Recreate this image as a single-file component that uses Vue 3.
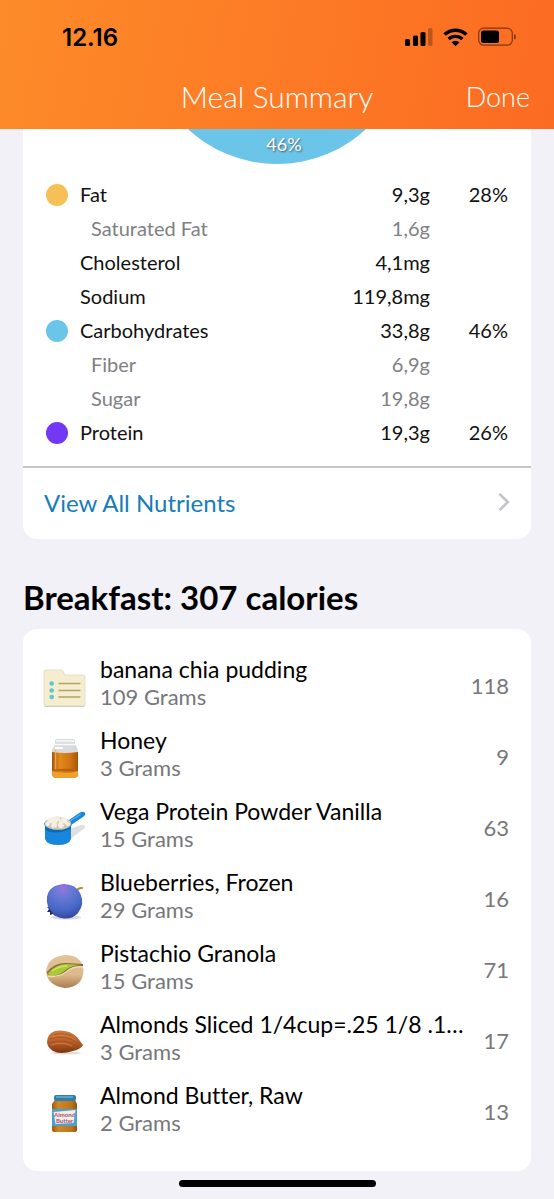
<script setup>
const nutrients = [
  { name: 'Fat', amount: '9,3g', percent: '28%', dot: 'fat' },
  { name: 'Saturated Fat', amount: '1,6g', sub: true },
  { name: 'Cholesterol', amount: '4,1mg' },
  { name: 'Sodium', amount: '119,8mg' },
  { name: 'Carbohydrates', amount: '33,8g', percent: '46%', dot: 'carbs' },
  { name: 'Fiber', amount: '6,9g', sub: true },
  { name: 'Sugar', amount: '19,8g', sub: true },
  { name: 'Protein', amount: '19,3g', percent: '26%', dot: 'protein' },
]

const foods = [
  { name: 'banana chia pudding', serving: '109 Grams', calories: 118, icon: 'recipe' },
  { name: 'Honey', serving: '3 Grams', calories: 9, icon: 'honey' },
  { name: 'Vega Protein Powder Vanilla', serving: '15 Grams', calories: 63, icon: 'scoop' },
  { name: 'Blueberries, Frozen', serving: '29 Grams', calories: 16, icon: 'blueberry' },
  { name: 'Pistachio Granola', serving: '15 Grams', calories: 71, icon: 'pistachio' },
  { name: 'Almonds Sliced 1/4cup=.25 1/8 .1…', serving: '3 Grams', calories: 17, icon: 'almond' },
  { name: 'Almond Butter, Raw', serving: '2 Grams', calories: 13, icon: 'butter' },
]
</script>

<template>
  <div class="page">
    <header class="header">
      <div class="status">
        <span class="clock">12.16</span>
        <svg class="signals" width="112" height="20" viewBox="0 0 112 20" aria-hidden="true">
          <rect x="0" y="12" width="5" height="7" rx="1.5" />
          <rect x="8" y="8.5" width="5" height="10.5" rx="1.5" />
          <rect x="15.5" y="5" width="5" height="14" rx="1.5" />
          <rect x="23" y="1" width="4.5" height="18" rx="1.5" opacity="0.25" />
          <g fill="none" stroke="#000" stroke-width="3.4">
            <path d="M39.5 7.6a16 16 0 0 1 22 0" />
            <path d="M43.6 12.1a10 10 0 0 1 13.8 0" />
          </g>
          <path d="M46.5 15.2a6 6 0 0 1 8 0l-4 4z" />
          <rect x="73.7" y="1.2" width="33.6" height="17" rx="5" fill="none" stroke="#000" stroke-opacity="0.5" stroke-width="1.2" />
          <rect x="76" y="3.5" width="18" height="12.5" rx="2.5" />
          <path d="M109 7v5.5q2-.8 2-2.75T109 7z" opacity="0.5" />
        </svg>
      </div>
      <div class="bar">
        <h1>Meal Summary</h1>
        <button type="button" class="done">Done</button>
      </div>
    </header>

    <main>
      <section class="card summary">
        <svg class="pie" width="262" height="35" viewBox="0 0 262 35" role="img" aria-label="Carbohydrates 46%">
          <circle cx="131" cy="-96" r="131" fill="#6bc5e8" />
          <text x="138" y="22" text-anchor="middle">46%</text>
        </svg>
        <table>
          <tbody>
            <tr v-for="n in nutrients" :key="n.name" :class="{ sub: n.sub }">
              <th scope="row">
                <span class="dot" :class="n.dot"></span>
                <span class="label">{{ n.name }}</span>
              </th>
              <td>{{ n.amount }}</td>
              <td class="percent">{{ n.percent }}</td>
            </tr>
          </tbody>
        </table>
        <a href="#nutrients" class="all">
          View All Nutrients
          <svg width="12" height="20" viewBox="0 0 12 20" fill="none" stroke="#c4c4c8" stroke-width="2.6" aria-hidden="true">
            <path d="M1.5 1.8 9.8 10 1.5 18.2" />
          </svg>
        </a>
      </section>

      <h2>Breakfast: 307 calories</h2>

      <ul class="card foods">
        <li v-for="f in foods" :key="f.name">
          <svg class="icon" width="44" height="44" viewBox="0 0 44 44" aria-hidden="true">
            <g v-if="f.icon === 'recipe'">
              <path d="M1 9q0-2 2-2h15q2 0 2.500 2l1 3H40q2 0 2 2v27q0 2-2 2H3q-2 0-2-2z" fill="#c9c7bc" />
              <path d="M1 8q0-2 2-2h15q2 0 2.500 2l1 3H40q2 0 2 2v27q0 2-2 2H3q-2 0-2-2z" fill="#f5edcf" stroke="#dcd6bb" stroke-width="0.7" />
              <g fill="#5dc5d3">
                <circle cx="8.7" cy="19.5" r="2.3" />
                <circle cx="8.7" cy="26.5" r="2.3" />
                <circle cx="8.7" cy="33" r="2.3" />
              </g>
              <path d="M15.500 19.500h22M15.500 26.500h22M15.500 33h22" stroke="#b6a06c" stroke-width="1.3" />
            </g>

            <g v-else-if="f.icon === 'honey'">
              <defs>
                <linearGradient id="honey">
                  <stop offset="0" stop-color="#a9560c" />
                  <stop offset="0.3" stop-color="#e28a1b" />
                  <stop offset="0.7" stop-color="#cf7411" />
                  <stop offset="1" stop-color="#a85509" />
                </linearGradient>
              </defs>
              <ellipse cx="24" cy="41" rx="12" ry="2" fill="#d9d0c8" />
              <path d="M12 6q0-2 2-2h16q2 0 2 2v3l2 4q1 1 1 3v22q0 5-5 5H14q-5 0-5-5V16q0-2 1-3l2-4z" fill="#d9dade" />
              <path d="M13 6h18M12 9.500h20" stroke="#fafafa" stroke-width="1.5" />
              <path d="M9 17q12.500 2 26 0v21q0 5-5 5H14q-5 0-5-5z" fill="url(#honey)" />
              <path d="M9 36q13 4 26 0v2q0 5-5 5H14q-5 0-5-5z" fill="#f0a12c" />
              <ellipse cx="22" cy="35" rx="9" ry="1.3" fill="#a65a0b" opacity="0.7" />
              <path d="M12.500 14v20" stroke="#f5bd69" stroke-width="1.5" opacity="0.7" />
              <path d="M12 13h8" stroke="#fff" stroke-width="2" />
            </g>

            <g v-else-if="f.icon === 'scoop'">
              <path d="M26 34 42 22q1-4-4-3L27 23z" fill="#e0e0e0" />
              <path d="M23 16 37 6.500q4-1.500 5 .5t-2 4L28 19z" fill="#1c86d8" />
              <path d="M26 15.500 37.500 8.500" stroke="#56b0ee" stroke-width="1.2" />
              <path d="M2 19v14q2 6 13 6t13-6V19z" fill="#1886dc" />
              <path d="M2 23q6 7 26 0v-4H2z" fill="#0d69b8" />
              <ellipse cx="15" cy="18" rx="13.8" ry="6" fill="#238fe0" />
              <ellipse cx="15" cy="17.5" rx="13" ry="6.3" fill="#d5c7a9" />
              <g fill="#f5f0e4">
                <circle cx="8" cy="15" r="3.5" />
                <circle cx="14" cy="13.5" r="3.7" />
                <circle cx="21" cy="15" r="3.5" />
                <circle cx="11" cy="19" r="3" />
                <circle cx="18" cy="19" r="3" />
                <circle cx="4.5" cy="18" r="2.3" />
                <circle cx="25" cy="18" r="2" />
              </g>
              <path d="M7 18h2M14 16h2M20 18h2M17 12h1M11 21h1" stroke="#c6b794" />
            </g>

            <g v-else-if="f.icon === 'blueberry'">
              <defs>
                <radialGradient id="berry" cx="0.45" cy="0.15" r="0.9">
                  <stop offset="0" stop-color="#9a72dc" />
                  <stop offset="0.25" stop-color="#6a7ad8" />
                  <stop offset="0.7" stop-color="#4466c4" />
                  <stop offset="1" stop-color="#353f98" />
                </radialGradient>
              </defs>
              <ellipse cx="23" cy="40.5" rx="15" ry="2" fill="#d8d8e4" />
              <path d="m9 29-5 1 2 2-2 3h3l0 3 3-1 2 2 3-3z" fill="#252d5e" />
              <path d="M33 15q1-4 6-4" fill="none" stroke="#b78339" stroke-width="2" stroke-linecap="round" />
              <path d="M21 7Q33 7 37.500 17T35 36q-5 6-14 5.500T8 34Q3 28 4 20 6 8 21 7z" fill="url(#berry)" />
            </g>

            <g v-else-if="f.icon === 'pistachio'">
              <defs>
                <linearGradient id="shell" x2="0" y2="1">
                  <stop offset="0" stop-color="#e2c49a" />
                  <stop offset="0.6" stop-color="#dcb98b" />
                  <stop offset="1" stop-color="#a97c4c" />
                </linearGradient>
              </defs>
              <path d="M3 24Q4 9 22 7q17 0 18.500 15Q40 39 22 40 5 38 3 24z" fill="url(#shell)" />
              <path d="M4 24q7-9 19-9l17 1v2q-10 1-15 5-8 6-16 6-5-1-5-5z" fill="#8b6835" />
              <path d="M5 25q8-9 19-9l15 1q-9 0-15 4-7 6-14 7-5 0-5-3z" fill="#a9c936" />
              <path d="M9 23q7-5 15-5" fill="none" stroke="#d1e363" stroke-width="1.5" />
              <path d="M5 28q9 2 18-4 7-6 17-5" fill="none" stroke="#f1dcb6" stroke-width="1.5" />
            </g>

            <g v-else-if="f.icon === 'almond'">
              <defs>
                <linearGradient id="almond" x2="0" y2="1">
                  <stop offset="0" stop-color="#cf7a3d" />
                  <stop offset="0.6" stop-color="#b45a26" />
                  <stop offset="1" stop-color="#75330f" />
                </linearGradient>
              </defs>
              <ellipse cx="23" cy="34" rx="15" ry="1.5" fill="#e3dcd6" />
              <path d="M4 23q0-8 8-11 13-2 22 6l6 8q-2 4-10 6-13 4-20 0-6-4-6-9z" fill="url(#almond)" />
              <path d="M7 20q14-6 30 5M6 24q15-5 29 3M9 28q13-3 22 2M11 16q8-3 17 1" fill="none" stroke="#8f4218" stroke-width="0.5" />
              <path d="M9 18q12-5 24 3M8 26q12-4 21 1" fill="none" stroke="#e09558" stroke-width="0.5" />
            </g>

            <g v-else>
              <defs>
                <linearGradient id="jar">
                  <stop offset="0" stop-color="#9b5a12" />
                  <stop offset="0.25" stop-color="#cf8723" />
                  <stop offset="0.8" stop-color="#bd7419" />
                  <stop offset="1" stop-color="#8e500e" />
                </linearGradient>
              </defs>
              <path d="M12 10h20l2 4v26q0 2-3 2H12q-3 0-3-2V14z" fill="url(#jar)" />
              <rect x="11" y="5" width="22" height="6" rx="2" fill="#2e7fae" />
              <path d="M13 7h17" stroke="#67aed2" stroke-width="1.5" />
              <path d="M9 19h25v17H9z" fill="#4ba0d2" />
              <path d="m10.500 22 22-2-2 13-18 1z" fill="#f3ece9" />
              <text class="jar-text" x="21.5" y="27" text-anchor="middle">Almond</text>
              <text class="jar-text" x="21.5" y="33" text-anchor="middle">Butter</text>
            </g>
          </svg>
          <div class="info">
            <div class="name">{{ f.name }}</div>
            <div class="serving">{{ f.serving }}</div>
          </div>
          <span class="calories">{{ f.calories }}</span>
        </li>
      </ul>
    </main>

    <div class="home"></div>
  </div>
</template>

<style>
body {
  background: #f2f1f7;
}
</style>

<style scoped>
.page {
  min-height: 100vh;
  display: flex;
  flex-direction: column;
  box-sizing: border-box;
  padding-bottom: 12px;
  background: #f2f1f7;
  color: #111;
  font-family: Lato, "Open Sans", sans-serif;
  font-size: 20px;
  font-variant-ligatures: none;
}
.header {
  height: 129px;
  background: linear-gradient(100deg, #fd8b29, #fc6b22);
}
.status {
  display: flex;
  align-items: center;
  justify-content: space-between;
  height: 74px;
  padding: 0 37px 0 62px;
  color: #000;
}
.clock {
  font-family: Inter, sans-serif;
  font-size: 24px;
  font-weight: 600;
}
.bar {
  display: grid;
  grid-template-columns: 1fr auto 1fr;
  align-items: center;
  height: 44px;
  padding: 0 24px;
  color: #fff;
}
h1 {
  grid-column: 2;
  margin: 0;
  font-size: 30px;
  font-weight: 300;
}
.done {
  justify-self: end;
  padding: 0;
  border: 0;
  background: none;
  color: inherit;
  font: inherit;
  font-size: 27px;
  font-weight: 300;
}
main {
  padding: 0 23px;
}
.card {
  margin: 0;
  border-radius: 14px;
  background: #fff;
}
.summary {
  border-top-left-radius: 0;
  border-top-right-radius: 0;
}
.pie {
  display: block;
  margin: 0 auto 14px;
}
.pie text {
  fill: #fff;
  font-size: 18px;
  text-shadow: 1px 1px 2px #456;
}
table {
  width: 100%;
  border-collapse: collapse;
}
tr {
  height: 34px;
}
th,
td {
  padding: 0;
  text-align: right;
  font-weight: 400;
}
td {
  padding-bottom: 3px;
}
th {
  display: flex;
  align-items: center;
  gap: 12px;
  height: 34px;
  padding-left: 23px;
}
.label {
  padding-bottom: 3px;
}
.percent {
  width: 101px;
  padding-right: 23px;
  box-sizing: border-box;
}
.sub {
  color: #808084;
}
.sub .label {
  padding-left: 11px;
}
.dot {
  width: 22px;
  height: 22px;
  border-radius: 50%;
}
.fat {
  background: #f5c056;
}
.carbs {
  background: #6bc5e8;
}
.protein {
  background: #7338f5;
}
.all {
  display: flex;
  align-items: center;
  justify-content: space-between;
  height: 68px;
  margin-top: 16px;
  padding: 0 21px 3px;
  border-top: 2px solid #c6c6c9;
  color: #177db8;
  font-size: 24px;
  text-decoration: none;
}
h2 {
  margin: 40px 0 14px;
  color: #000;
  font-size: 33px;
  line-height: 36px;
  font-weight: 700;
}
.foods {
  padding: 21px 22px 24px 20px;
  list-style: none;
}
.foods li {
  display: flex;
  align-items: center;
  height: 71px;
}
.icon {
  flex: none;
  margin-right: 13px;
}
.info {
  flex: 1;
  min-width: 0;
  padding-bottom: 6px;
  line-height: 28px;
}
.name {
  overflow: hidden;
  color: #000;
  font-size: 23px;
  text-overflow: ellipsis;
  white-space: nowrap;
}
.serving {
  color: #77777b;
  font-size: 22px;
}
.calories {
  color: #77777b;
  font-size: 22px;
  text-align: right;
}
.jar-text {
  fill: #a3536b;
  font-size: 6px;
  font-weight: 700;
}
.home {
  width: 197px;
  height: 7px;
  margin: auto auto 0;
  border-radius: 4px;
  background: #000;
}
</style>
